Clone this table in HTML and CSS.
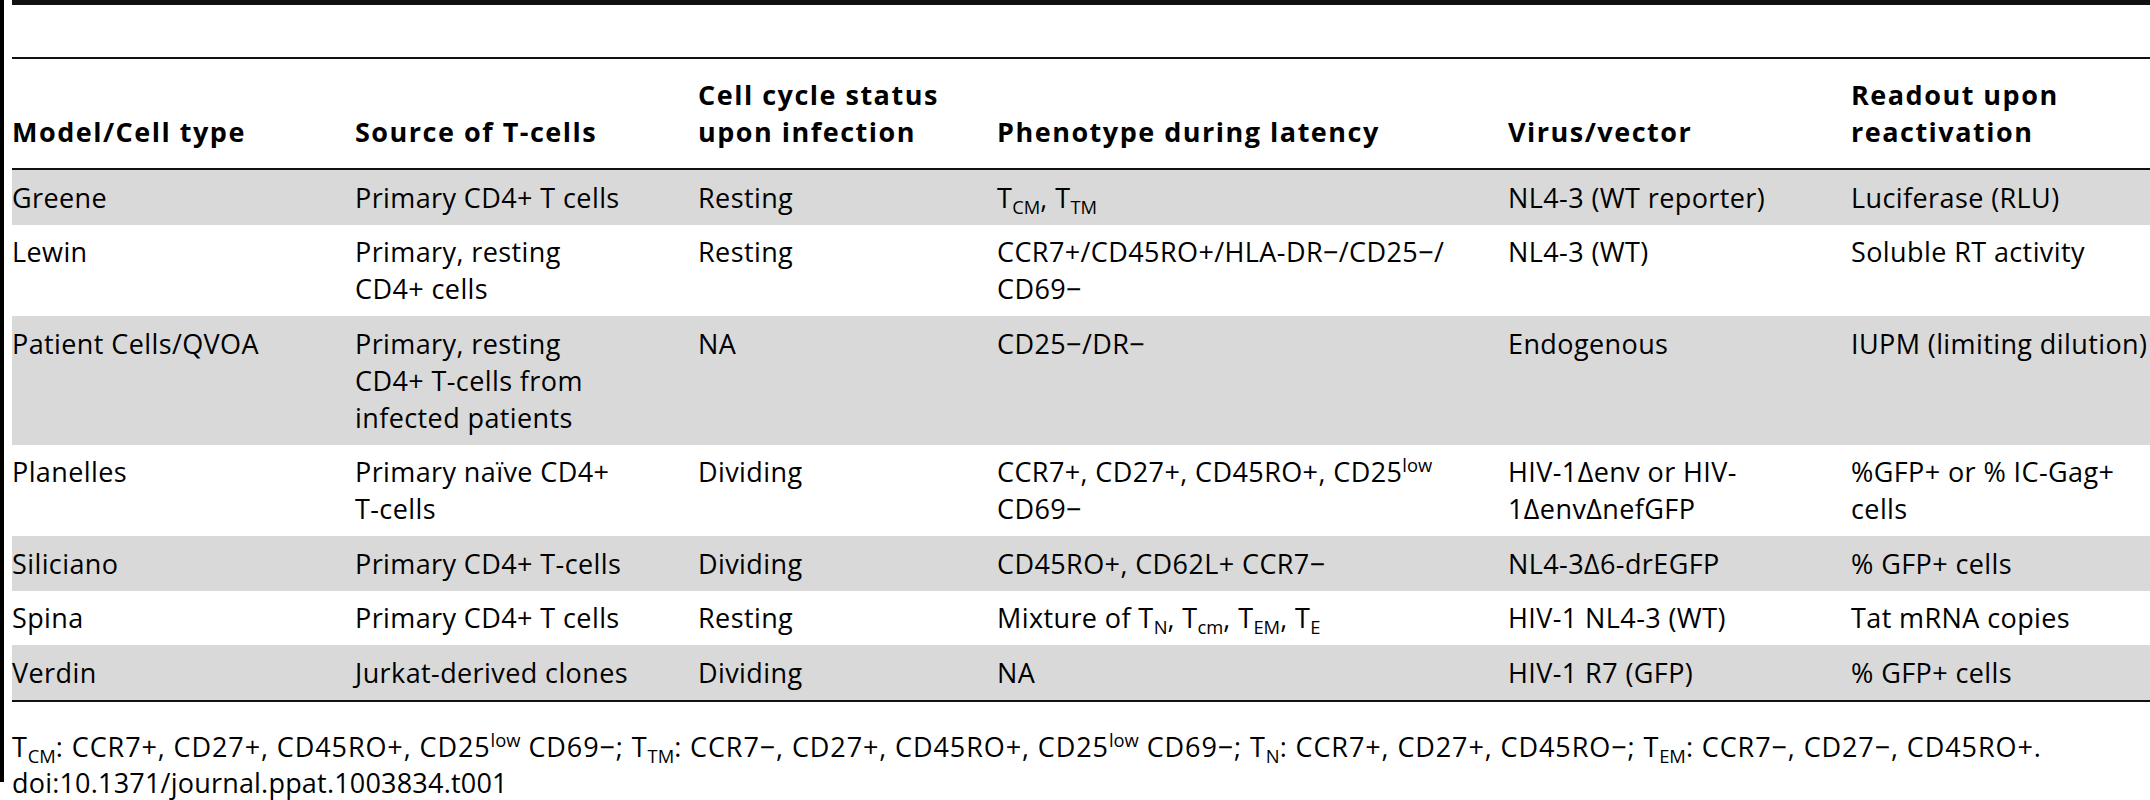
FILE: index.html
```html
<!DOCTYPE html>
<html lang="en">
<head>
<meta charset="utf-8">
<title>Table 1</title>
<link rel="stylesheet" href="styles.css">
</head>
<body>
<div class="page">
  <div class="edge"></div>
  <div class="sheet">
    <div class="caption-space"></div>
    <table class="data">
      <colgroup>
        <col class="c1"><col class="c2"><col class="c3"><col class="c4"><col class="c5"><col class="c6">
      </colgroup>
      <thead>
        <tr>
          <th>Model/Cell type</th>
          <th>Source of T-cells</th>
          <th>Cell cycle status<br>upon infection</th>
          <th>Phenotype during latency</th>
          <th>Virus/vector</th>
          <th>Readout upon<br>reactivation</th>
        </tr>
      </thead>
      <tbody>
        <tr class="shade">
          <td>Greene</td>
          <td>Primary CD4+ T cells</td>
          <td>Resting</td>
          <td>T<sub>CM</sub>, T<sub>TM</sub></td>
          <td>NL4-3 (WT reporter)</td>
          <td>Luciferase (RLU)</td>
        </tr>
        <tr>
          <td>Lewin</td>
          <td>Primary, resting<br>CD4+ cells</td>
          <td>Resting</td>
          <td>CCR7+/CD45RO+/HLA-DR&minus;/CD25&minus;/<br>CD69&minus;</td>
          <td>NL4-3 (WT)</td>
          <td>Soluble RT activity</td>
        </tr>
        <tr class="shade">
          <td>Patient Cells/QVOA</td>
          <td>Primary, resting<br>CD4+ T-cells from<br>infected patients</td>
          <td>NA</td>
          <td>CD25&minus;/DR&minus;</td>
          <td>Endogenous</td>
          <td>IUPM (limiting dilution)</td>
        </tr>
        <tr>
          <td>Planelles</td>
          <td>Primary na&iuml;ve CD4+<br>T-cells</td>
          <td>Dividing</td>
          <td>CCR7+, CD27+, CD45RO+, CD25<sup>low</sup><br>CD69&minus;</td>
          <td>HIV-1&Delta;env or HIV-<br>1&Delta;env&Delta;nefGFP</td>
          <td>%GFP+ or % IC-Gag+<br>cells</td>
        </tr>
        <tr class="shade">
          <td>Siliciano</td>
          <td>Primary CD4+ T-cells</td>
          <td>Dividing</td>
          <td>CD45RO+, CD62L+ CCR7&minus;</td>
          <td>NL4-3&Delta;6-drEGFP</td>
          <td>% GFP+ cells</td>
        </tr>
        <tr>
          <td>Spina</td>
          <td>Primary CD4+ T cells</td>
          <td>Resting</td>
          <td>Mixture of T<sub>N</sub>, T<sub>cm</sub>, T<sub>EM</sub>, T<sub>E</sub></td>
          <td>HIV-1 NL4-3 (WT)</td>
          <td>Tat mRNA copies</td>
        </tr>
        <tr class="shade last">
          <td>Verdin</td>
          <td>Jurkat-derived clones</td>
          <td>Dividing</td>
          <td>NA</td>
          <td>HIV-1 R7 (GFP)</td>
          <td>% GFP+ cells</td>
        </tr>
      </tbody>
    </table>
    <div class="notes">
      <p>T<sub>CM</sub>: CCR7+, CD27+, CD45RO+, CD25<sup>low</sup> CD69&minus;; T<sub>TM</sub>: CCR7&minus;, CD27+, CD45RO+, CD25<sup>low</sup> CD69&minus;; T<sub>N</sub>: CCR7+, CD27+, CD45RO&minus;; T<sub>EM</sub>: CCR7&minus;, CD27&minus;, CD45RO+.</p>
      <p class="doi">doi:10.1371/journal.ppat.1003834.t001</p>
    </div>
  </div>
</div>
</body>
</html>
```

FILE: styles.css
```css
html, body {
  margin: 0;
  padding: 0;
  overflow: hidden;
  background: #ffffff;
}

body {
  font-family: "Open Sans", "Noto Sans", "Liberation Sans", sans-serif;
  font-size: 27px;
  color: #000000;
}

.page {
  display: flex;
  gap: 8px;
  width: 2150px;
  height: 800px;
}

.edge {
  flex: none;
  width: 4px;
  height: 782px;
  background: #000000;
}

.sheet {
  flex: 1;
  min-width: 0;
}

.caption-space {
  height: 52px;
  border-top: 5px solid #111111;
}

.data {
  width: 2138px;
  table-layout: fixed;
  border-collapse: separate;
  border-spacing: 0;
  letter-spacing: 0.4px;
}

.c1 { width: 343px; }
.c2 { width: 343px; }
.c3 { width: 299px; }
.c4 { width: 511px; }
.c5 { width: 343px; }
.c6 { width: 299px; }

.data th {
  font-weight: 700;
  text-align: left;
  vertical-align: bottom;
  line-height: 37px;
  letter-spacing: 1.5px;
  padding: 17px 0 18px 0;
  border-top: 2px solid #111111;
  border-bottom: 2px solid #111111;
  white-space: nowrap;
}

.data td {
  text-align: left;
  vertical-align: top;
  line-height: 37px;
  padding: 8.5px 0 9px 0;
  white-space: nowrap;
}

.data tr.shade td {
  background: #d9d9d9;
}

.data tr.last td {
  border-bottom: 2px solid #111111;
}

sub, sup {
  font-size: 0.68em;
  line-height: 0;
  letter-spacing: 0;
}

sub {
  vertical-align: -0.3em;
}

sup {
  vertical-align: 0.55em;
}

.notes {
  margin-top: 27px;
}

.notes p {
  margin: 0;
  line-height: 36px;
  white-space: nowrap;
  letter-spacing: 0.9px;
}

.notes p.doi {
  letter-spacing: 0.2px;
}
```
